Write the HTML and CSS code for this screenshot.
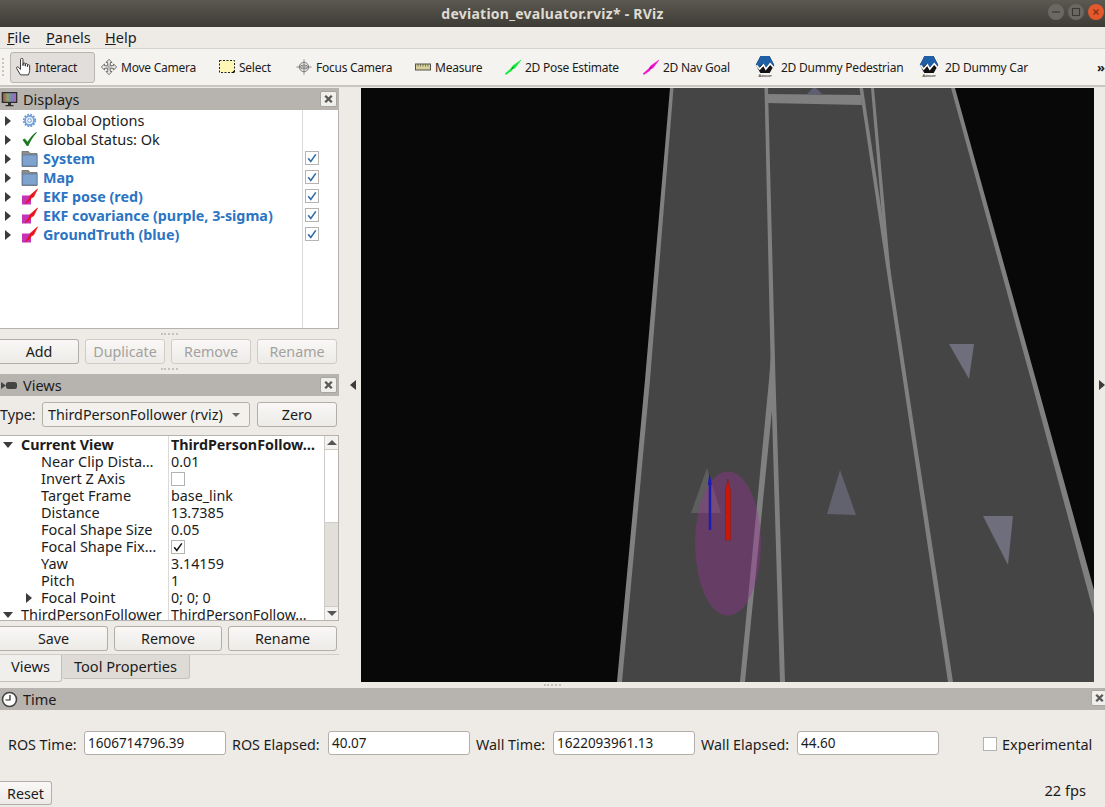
FILE: index.html
```html
<!DOCTYPE html>
<html lang="en">
<head>
<meta charset="utf-8">
<title>deviation_evaluator.rviz* - RViz</title>
<link rel="stylesheet" href="styles.css">
</head>
<body>
<svg class="defs" width="0" height="0" aria-hidden="true">
  <defs>
    <symbol id="close-x" viewBox="0 0 16 15"><path d="M4.500 4l7 7M11.500 4l-7 7" stroke="#5a5a58" stroke-width="2.600" fill="none"/></symbol>
    <symbol id="arrow-r" viewBox="0 0 6 10"><path d="M0 0l6 5-6 5z" fill="#3c3c3c"/></symbol>
    <symbol id="folder" viewBox="0 0 17 17"><path d="M1 1.500h6.500l1.500 2h7v13H1z" fill="#8c8c8a" stroke="#6c6c6a" stroke-width=".8"/><rect x="1.500" y="5" width="14.500" height="11" fill="#7fa3cf" stroke="#5d7a9c" stroke-width=".8"/></symbol>
    <symbol id="display" viewBox="0 0 17 17"><rect x="1" y="7.500" width="9" height="9" fill="#c733b8"/><path d="M4 16L8 10.500l1-3L16.500 1 12.500 9l-2 .8-1.500 2.500z" fill="#e8141c" stroke="#e8141c" stroke-width=".7" stroke-linejoin="round"/></symbol>
    <symbol id="check-blue" viewBox="0 0 14 14"><rect x=".5" y=".5" width="13" height="13" fill="#fff" stroke="#b5b3b0"/><path d="M3.200 7.200l2.600 3.200 5-7" stroke="#2f6aa8" stroke-width="1.600" fill="none"/></symbol>
    <symbol id="autoware" viewBox="0 0 24 22">
      <path d="M2.800 9L7.500 0h9l4.700 9-4.500 8H7.300z" fill="#111"/>
      <path d="M2.800 9L7.500 0h9l4.700 9-1.400 1.600-3.100-3.400-4.300 5-2.700-4.700-3.400 3.600z" fill="#1f5fa6"/>
      <path d="M3.500 9.300l3.200 3.800 3.700-4.300 2.400 4.300 4.400-5.400 3 3.600" stroke="#fff" stroke-width="1.600" fill="none"/>
      <text x="12" y="21.400" text-anchor="middle" class="aw-text">Autoware</text>
    </symbol>
  </defs>
</svg>

<div class="app">
  <header class="titlebar">
    <span class="title">deviation_evaluator.rviz* - RViz</span>
    <div class="winbtns">
      <svg class="winbtn" viewBox="0 0 16 16"><circle cx="8" cy="8" r="8" fill="#6a6861"/><path d="M4 8h8" stroke="#3a3934" stroke-width="1.200"/></svg>
      <svg class="winbtn" viewBox="0 0 16 16"><circle cx="8" cy="8" r="8" fill="#6a6861"/><rect x="4.500" y="4.500" width="7" height="7" fill="none" stroke="#3a3934" stroke-width="1.100"/></svg>
      <svg class="winbtn" viewBox="0 0 16 16"><circle cx="8" cy="8" r="8" fill="#e5582c"/><path d="M5.500 5.500l5 5M10.500 5.500l-5 5" stroke="#7c3118" stroke-width="1.300"/></svg>
    </div>
  </header>

  <nav class="menubar">
    <span class="menu menu-file"><u>F</u>ile</span>
    <span class="menu menu-panels"><u>P</u>anels</span>
    <span class="menu"><u>H</u>elp</span>
  </nav>

  <div class="toolbar">
    <span class="grip"></span>
    <div class="tool tool-interact active">
      <svg class="ticon" viewBox="1 1 13.500 16.500"><path d="M5 16.500L1.500 10.500c-.6-1.300 1-2 1.800-.9L5 11.500V2.500c0-1.700 2.300-1.700 2.300 0V8V6.500c0-1.300 2.100-1.300 2.100 0V8.500V7c0-1.200 2-1.200 2 0v2V8c0-1.100 2-1.100 2 0v4.500c0 1.800-.8 2.700-1.200 4z" fill="#fff" stroke="#222" stroke-width=".8"/></svg>
      <span class="tlabel">Interact</span>
    </div>
    <div class="tool tool-move">
      <svg class="ticon" viewBox="0 0 16 16"><path d="M8 .3l3 3.200H9.300v3.200h3.200V5L15.700 8l-3.200 3V9.300H9.300v3.200H11L8 15.700l-3-3.200h1.700V9.300H3.500V11L.3 8l3.200-3v1.700h3.200V3.500H5z" fill="#ececea" stroke="#6f6f6f" stroke-width="1"/><path d="M5 8h6M8 5v6" stroke="#9a9a98" stroke-width=".8"/></svg>
      <span class="tlabel">Move Camera</span>
    </div>
    <div class="tool tool-select">
      <svg class="ticon" viewBox="0 0 16 16"><rect x=".5" y="1.500" width="15" height="12" fill="#fdf6b4" stroke="#222" stroke-dasharray="2 1.500"/><path d="M12.500 14l3-3v3z" fill="#111"/></svg>
      <span class="tlabel">Select</span>
    </div>
    <div class="tool tool-focus">
      <svg class="ticon" viewBox="0 0 17 17"><circle cx="8.500" cy="8.500" r="5" fill="#e8e8e6" stroke="#777"/><path d="M8.500 .5v16M.5 8.500h16M4 8.500a4.500 2 0 0 0 9 0M4 8.500a4.500 2 0 0 1 9 0" stroke="#777" stroke-width=".9" fill="none"/></svg>
      <span class="tlabel">Focus Camera</span>
    </div>
    <div class="tool tool-measure">
      <svg class="ticon" viewBox="0 0 16 16"><rect x=".5" y="5" width="15" height="6" fill="#d8d09a" stroke="#55534a"/><path d="M3 5v2.500M5.500 5v2.500M8 5v2.500M10.500 5v2.500M13 5v2.500" stroke="#55534a" stroke-width=".7"/></svg>
      <span class="tlabel">Measure</span>
    </div>
    <div class="tool tool-pose">
      <svg class="ticon" viewBox="0 0 16 16"><path d="M0 14.800L6 9.500 7.500 7 16 1l-6 8-2 .8-1.500 2L1 15.500z" fill="#12e83a" stroke="#12e83a" stroke-width=".5"/><path d="M5.500 11L8 8l1 .7z" fill="#0b7a26"/></svg>
      <span class="tlabel">2D Pose Estimate</span>
    </div>
    <div class="tool tool-nav">
      <svg class="ticon" viewBox="0 0 16 16"><path d="M0 14.800L6 9.500 7.500 7 16 1l-6 8-2 .8-1.500 2L1 15.500z" fill="#ee10d0" stroke="#ee10d0" stroke-width=".5"/><path d="M5.500 11L8 8l1 .7z" fill="#8a0a7c"/></svg>
      <span class="tlabel">2D Nav Goal</span>
    </div>
    <div class="tool tool-ped">
      <svg class="ticon-wide"><use href="#autoware"/></svg>
      <span class="tlabel">2D Dummy Pedestrian</span>
    </div>
    <div class="tool tool-car">
      <svg class="ticon-wide"><use href="#autoware"/></svg>
      <span class="tlabel">2D Dummy Car</span>
    </div>
    <span class="more">»</span>
  </div>

  <main class="workspace">
    <aside class="dock">
      <div class="dock-title">
        <svg class="dock-icon" viewBox="0 0 17 17"><rect x=".7" y="1" width="15.600" height="11" fill="#2c2c2c"/><defs><linearGradient id="rainbow"><stop offset="0" stop-color="#b8474f"/><stop offset=".35" stop-color="#7eaa62"/><stop offset=".65" stop-color="#7d7fc0"/><stop offset="1" stop-color="#a06cb0"/></linearGradient></defs><rect x="2" y="2.200" width="13" height="8.600" fill="url(#rainbow)"/><path d="M7 12h3v2h2.500v1.300h-8V14H7z" fill="#2c2c2c"/></svg>
        <span class="dock-name">Displays</span>
        <svg class="dock-close"><use href="#close-x"/></svg>
      </div>
      <div class="tree displays">
        <div class="drow"><svg class="exp"><use href="#arrow-r"/></svg>
          <svg class="dicon" viewBox="0 0 17 17"><circle cx="8.500" cy="8.500" r="4.500" fill="#e4edf9" stroke="#6d9ad8" stroke-width="1.600"/><circle cx="8.500" cy="8.500" r="5.800" fill="none" stroke="#6d9ad8" stroke-width="1.800" stroke-dasharray="1.800 1.240"/><circle cx="8.500" cy="8.500" r="1.800" fill="#fff" stroke="#6d9ad8"/></svg>
          <span class="dname">Global Options</span></div>
        <div class="drow"><svg class="exp"><use href="#arrow-r"/></svg>
          <svg class="dicon" viewBox="0 0 17 17"><path d="M1.500 8.800L3.800 7.500l2.700 3.300C9 6.800 12 3.500 15.200 1l.6.8C12.500 5 9.500 10 7.300 15H5.800z" fill="#1d7a20"/></svg>
          <span class="dname">Global Status: Ok</span></div>
        <div class="drow"><svg class="exp"><use href="#arrow-r"/></svg><svg class="dicon"><use href="#folder"/></svg><span class="dname on">System</span><svg class="dcheck"><use href="#check-blue"/></svg></div>
        <div class="drow"><svg class="exp"><use href="#arrow-r"/></svg><svg class="dicon"><use href="#folder"/></svg><span class="dname on">Map</span><svg class="dcheck"><use href="#check-blue"/></svg></div>
        <div class="drow"><svg class="exp"><use href="#arrow-r"/></svg><svg class="dicon"><use href="#display"/></svg><span class="dname on">EKF pose (red)</span><svg class="dcheck"><use href="#check-blue"/></svg></div>
        <div class="drow"><svg class="exp"><use href="#arrow-r"/></svg><svg class="dicon"><use href="#display"/></svg><span class="dname on">EKF covariance (purple, 3-sigma)</span><svg class="dcheck"><use href="#check-blue"/></svg></div>
        <div class="drow"><svg class="exp"><use href="#arrow-r"/></svg><svg class="dicon"><use href="#display"/></svg><span class="dname on">GroundTruth (blue)</span><svg class="dcheck"><use href="#check-blue"/></svg></div>
      </div>
      <div class="split split-a"><span class="dots"></span></div>
      <div class="btnrow btnrow-disp">
        <span class="btn btn-add">Add</span>
        <span class="btn btn-std off">Duplicate</span>
        <span class="btn btn-std off">Remove</span>
        <span class="btn btn-std off">Rename</span>
      </div>
      <div class="split split-b"><span class="dots"></span></div>
      <div class="dock-title">
        <svg class="dock-icon" viewBox="0 0 17 17"><path d="M0 5l5 3.500L0 12z" fill="#444"/><rect x="5" y="5" width="11" height="7" rx="2.500" fill="#444"/></svg>
        <span class="dock-name">Views</span>
        <svg class="dock-close"><use href="#close-x"/></svg>
      </div>
      <div class="typerow">
        <span class="typelabel">Type:</span>
        <div class="combo"><span>ThirdPersonFollower (rviz)</span><i class="caret"></i></div>
        <span class="btn btn-zero">Zero</span>
      </div>
      <div class="props">
        <div class="props-body">
          <div class="prow"><span class="pname lv0 bold"><i class="tri-down"></i>Current View</span><span class="pval bold">ThirdPersonFollow…</span></div>
          <div class="prow"><span class="pname lv1">Near Clip Dista…</span><span class="pval">0.01</span></div>
          <div class="prow"><span class="pname lv1">Invert Z Axis</span><span class="pval"><i class="box"></i></span></div>
          <div class="prow"><span class="pname lv1">Target Frame</span><span class="pval">base_link</span></div>
          <div class="prow"><span class="pname lv1">Distance</span><span class="pval">13.7385</span></div>
          <div class="prow"><span class="pname lv1">Focal Shape Size</span><span class="pval">0.05</span></div>
          <div class="prow"><span class="pname lv1">Focal Shape Fix…</span><span class="pval"><svg class="box-check" viewBox="0 0 14 14"><rect x=".5" y=".5" width="13" height="13" fill="#fff" stroke="#b5b3b0"/><path d="M3.200 7.200l2.600 3.200 5-7" stroke="#111" stroke-width="1.500" fill="none"/></svg></span></div>
          <div class="prow"><span class="pname lv1">Yaw</span><span class="pval">3.14159</span></div>
          <div class="prow"><span class="pname lv1">Pitch</span><span class="pval">1</span></div>
          <div class="prow"><span class="pname lv1 with-exp"><svg class="exp-small"><use href="#arrow-r"/></svg>Focal Point</span><span class="pval">0; 0; 0</span></div>
          <div class="prow"><span class="pname lv0"><i class="tri-down"></i>ThirdPersonFollower</span><span class="pval">ThirdPersonFollow…</span></div>
        </div>
        <div class="vscroll">
          <span class="sb-btn"><i class="sb-up"></i></span>
          <span class="sb-thumb"></span>
          <span class="sb-track"></span>
          <span class="sb-btn sb-btn-end"><i class="sb-down"></i></span>
        </div>
      </div>
      <div class="btnrow btnrow-views">
        <span class="btn btn-save">Save</span>
        <span class="btn btn-rem">Remove</span>
        <span class="btn btn-ren">Rename</span>
      </div>
      <div class="tabs">
        <span class="tab tab-on">Views</span>
        <span class="tab tab-off">Tool Properties</span>
      </div>
    </aside>

    <div class="handle handle-left"><svg class="handle-arrow"><use href="#arrow-r"/></svg></div>

    <section class="viewport">
      <svg class="scene" viewBox="361 88 733 594" preserveAspectRatio="none">
        <rect x="361" y="88" width="733" height="594" fill="#080808"/>
        <polygon points="672,88 953,88 1094,612 1094,682 620,682" fill="#454545"/>
        <polygon points="807,94 813,88 816,88 822,94" fill="#5f5f72"/>
        <g fill="#808080">
          <polygon points="670,88 673.500,88 650,380 622,682 617,682 645,380"/>
          <polygon points="764.500,88 768,88 775.500,380 785,682 780,682 771,380"/>
          <polygon points="772.500,335 775,380 745,682 740,682 769,380"/>
          <polygon points="859.500,88 863,88 907,380 953,682 948,682 903,380"/>
          <polygon points="871,88 874,88 893,300 884,240"/>
          <polygon points="951,88 955,88 1036,380 1094,590 1094,614 1031,380"/>
          <polygon points="766,94 861,95 862,105 767,103"/>
        </g>
        <polygon points="949,344 974,344 969,379" fill="#6e6e7c"/>
        <polygon points="840,470 827,514 856,515" fill="#62626f"/>
        <polygon points="983,516 1013,516 1008,565" fill="#6e6e7c"/>
        <polygon points="707,468 691,513 721,513" fill="#5e5e5e"/>
        <ellipse cx="728" cy="543.500" rx="33" ry="72" fill="#973197" fill-opacity=".4"/>
        <polygon points="709.500,473 707.800,485 708.800,485 708.800,530 711.200,530 711.200,485 712,485" fill="#1c1cb4"/>
        <polygon points="727.800,479 725.800,489 725.500,489 725.500,540 730.500,540 730.500,489 729.800,489" fill="#c8180a" stroke="#8f1810" stroke-width=".5"/>
      </svg>
    </section>

    <div class="handle handle-right"><svg class="handle-arrow-r"><use href="#arrow-r"/></svg></div>
  </main>

  <div class="split split-c"><span class="dots"></span></div>

  <section class="timepanel">
    <div class="dock-title dock-title-time">
      <svg class="dock-icon" viewBox="0 0 17 17"><circle cx="8.500" cy="8.500" r="7" fill="#fff" stroke="#444" stroke-width="1.600"/><path d="M9 4v5H4.500" stroke="#222" stroke-width="1.200" fill="none"/></svg>
      <span class="dock-name">Time</span>
      <svg class="dock-close dock-close-time"><use href="#close-x"/></svg>
    </div>
    <div class="timerow">
      <span class="tl tl-rt">ROS Time:</span><span class="field">1606714796.39</span>
      <span class="tl tl-re">ROS Elapsed:</span><span class="field">40.07</span>
      <span class="tl tl-wt">Wall Time:</span><span class="field">1622093961.13</span>
      <span class="tl tl-we">Wall Elapsed:</span><span class="field">44.60</span>
      <i class="box box-exp"></i><span class="explabel">Experimental</span>
    </div>
    <div class="statusrow">
      <span class="btn btn-reset">Reset</span>
      <span class="fps">22 fps</span>
    </div>
  </section>
</div>
</body>
</html>
```
FILE: styles.css
```css
* { box-sizing: border-box; }
html, body { margin: 0; padding: 0; }
body {
  width: 1105px;
  height: 807px;
  overflow: hidden;
  background: #eeebe7;
  color: #1c1c1c;
  font-family: "Noto Sans", "Open Sans", sans-serif;
  font-size: 14px;
}
i { font-style: normal; display: block; }
.defs { position: absolute; }
.aw-text { font: italic 3.600px "Liberation Sans", sans-serif; fill: #222; }

.app { display: flex; flex-direction: column; height: 807px; }

/* title bar */
.titlebar {
  height: 27px;
  flex: none;
  background: linear-gradient(#5b5951, #3d3b35);
  display: flex;
  align-items: center;
  justify-content: center;
  position: relative;
}
.title { color: #dfdbd2; font-weight: 700; font-size: 14px; letter-spacing: .25px; }
.winbtns { position: absolute; right: 1px; top: 4px; display: flex; gap: 4px; }
.winbtn { width: 16px; height: 16px; display: block; }

/* menu */
.menubar {
  height: 22px;
  flex: none;
  display: flex;
  align-items: center;
  padding: 0 0 2px 7px;
  background: #eeebe7;
  border-bottom: 1px solid #d6d3ce;
}
.menu { font-size: 14.500px; }
.menu-file { width: 39px; }
.menu-panels { width: 59px; }

/* toolbar */
.toolbar {
  height: 38px;
  flex: none;
  display: flex;
  align-items: center;
  background: #f5f3ef;
  border-bottom: 2px solid #c9c6c1;
  position: relative;
  font-size: 12px;
  letter-spacing: -.25px;
}
.grip { width: 4px; height: 18px; margin-left: 2px; margin-right: 4px; border-left: 2px dotted #c9c6c1; }
.tool { display: flex; align-items: center; height: 31px; gap: 4px; flex: none; }
.ticon { width: 16px; height: 16px; flex: none; }
.ticon-wide { width: 24px; height: 22px; flex: none; }
.tlabel { white-space: nowrap; }
.tool-interact { width: 85px; padding-left: 4px; background: #e1dedb; border: 1px solid #b8b5b0; border-radius: 3px; }
.tool-interact .ticon { width: 17px; height: 18px; margin-right: -1px; }
.tool-move { margin-left: 6px; width: 118px; }
.tool-select { width: 77px; }
.tool-focus { width: 119px; }
.tool-measure { width: 90px; }
.tool-pose { width: 138px; }
.tool-nav { width: 110px; }
.tool-ped { width: 164px; }
.tool-car { width: 180px; }
.more { font-weight: 700; font-size: 13px; letter-spacing: 0; }

/* workspace */
.workspace { height: 595px; flex: none; display: flex; padding-top: 1px; }
.dock { width: 339px; flex: none; display: flex; flex-direction: column; }
.dock-title {
  height: 22px;
  flex: none;
  display: flex;
  align-items: center;
  background: #b7b3af;
  padding-left: 1px;
  position: relative;
  font-size: 14.500px;
}
.dock-icon { width: 17px; height: 17px; flex: none; }
.dock-name { margin-left: 5px; }
.dock-close {
  width: 17px;
  height: 16px;
  margin-left: auto;
  margin-right: 2px;
  background: #f1efec;
  border: 1px solid #a9a6a2;
  border-radius: 2px;
}
.dock-close-time { margin-right: -3px; margin-top: -2px; }

/* displays tree */
.displays {
  height: 219px;
  flex: none;
  background: #fff;
  border-right: 1px solid #b5b2ae;
  border-bottom: 1px solid #b5b2ae;
  position: relative;
  padding-top: 1px;
}
.displays::after {
  content: "";
  position: absolute;
  left: 302px;
  top: 0;
  bottom: 0;
  width: 1px;
  background: #dcdad7;
}
.drow { height: 19px; display: flex; align-items: center; position: relative; }
.exp { width: 6px; height: 10px; margin-left: 5px; flex: none; }
.dicon { width: 17px; height: 17px; margin-left: 10px; flex: none; }
.dname { margin: 0 0 1px 5px; font-size: 14.500px; line-height: 17px; white-space: nowrap; }
.dname.on { color: #2b74c3; font-weight: 700; font-size: 14.300px; }
.dcheck { width: 14px; height: 14px; position: absolute; left: 305px; top: 2px; }

.split { display: flex; justify-content: center; align-items: center; flex: none; }
.dots { width: 17px; height: 0; border-top: 2px dotted #c4c1bc; }
.split-a { height: 10px; }
.split-b { height: 10px; }
.split-c { height: 6px; }
.split-a .dots, .split-b .dots { margin-bottom: 1px; }

/* buttons */
.btnrow { display: flex; flex: none; height: 25px; }
.btn {
  display: flex;
  align-items: center;
  justify-content: center;
  background: linear-gradient(#f9f8f6, #ecebe8);
  border: 1px solid #b2afaa;
  border-radius: 3px;
  font-size: 14.300px;
  flex: none;
}
.btn.off { color: #a3a19e; border-color: #cfccc8; }
.btn-add { width: 79px; border-left: none; border-radius: 0 3px 3px 0; }
.btn-std { width: 80px; margin-left: 6px; }
.btn-zero { width: 80px; height: 25px; margin-left: 7px; }
.btn-save { width: 108px; border-left: none; border-radius: 0 3px 3px 0; }
.btn-rem { width: 108px; margin-left: 6px; }
.btn-ren { width: 109px; margin-left: 6px; }
.btn-reset { width: 52px; height: 24px; border-left: none; border-radius: 0 3px 3px 0; }

/* views */
.typerow { height: 25px; margin-top: 6px; display: flex; align-items: center; flex: none; font-size: 14.300px; }
.typelabel { width: 42px; flex: none; }
.combo {
  width: 208px;
  height: 25px;
  display: flex;
  align-items: center;
  justify-content: space-between;
  padding: 0 9px 0 5px;
  background: #f3f1ee;
  border: 1px solid #b2afaa;
  border-radius: 3px;
  white-space: nowrap;
  font-size: 14.300px;
}
.caret { width: 0; height: 0; border: 4px solid transparent; border-top: 4px solid #666; border-bottom: 0; }

.props {
  height: 186px;
  margin-top: 8px;
  flex: none;
  display: flex;
  background: #fff;
  border-top: 1px solid #b5b2ae;
  border-right: 1px solid #b5b2ae;
  border-bottom: 1px solid #b5b2ae;
}
.props-body { width: 324px; flex: none; overflow: hidden; height: 184px; position: relative; }
.props-body::after {
  content: "";
  position: absolute;
  left: 168px;
  top: 0;
  bottom: 0;
  width: 1px;
  background: #dcdad7;
}
.prow { height: 17px; line-height: 17px; display: flex; align-items: center; white-space: nowrap; font-size: 14.500px; }
.pname { width: 168px; flex: none; display: flex; align-items: center; }
.pval { margin-left: 3px; display: flex; align-items: center; font-size: 14.300px; }
.lv0 { padding-left: 3px; }
.lv1 { padding-left: 41px; }
.bold { font-weight: 700; font-size: 14.300px; }
.tri-down { width: 0; height: 0; border: 5px solid transparent; border-top: 6px solid #3c3c3c; border-bottom: 0; margin-right: 8px; margin-left: 0; flex: none; }
.with-exp { padding-left: 26px; }
.exp-small { width: 6px; height: 10px; margin-right: 9px; flex: none; }
.box { width: 14px; height: 14px; background: #fff; border: 1px solid #b5b3b0; flex: none; }
.box-check { width: 14px; height: 14px; display: block; }

.vscroll { flex: 1; display: flex; flex-direction: column; border-left: 1px solid #cfccc8; }
.sb-btn { height: 14px; flex: none; display: flex; align-items: center; justify-content: center; background: #f4f2ef; border-bottom: 1px solid #cfccc8; }
.sb-btn-end { border-bottom: none; border-top: 1px solid #cfccc8; }
.sb-up { width: 0; height: 0; border: 5px solid transparent; border-bottom: 5px solid #555; border-top: 0; }
.sb-down { width: 0; height: 0; border: 5px solid transparent; border-top: 5px solid #555; border-bottom: 0; }
.sb-thumb { height: 73px; flex: none; background: #fff; border-bottom: 1px solid #cfccc8; }
.sb-track { flex: 1; background: #e2dfdb; }

.btnrow-views { margin-top: 5px; }

.tabs { display: flex; margin-top: 3px; height: 29px; flex: none; border-top: 1px solid #d0cdc8; align-items: flex-start; font-size: 14.600px; }
.tab { display: flex; align-items: center; justify-content: center; flex: none; }
.tab-on { width: 62px; height: 27px; padding: 0 0 5px 0; background: #f1efec; border-right: 1px solid #c4c1bc; border-bottom: 1px solid #c4c1bc; border-radius: 0 0 3px 0; }
.tab-off { width: 128px; height: 24px; padding: 0 0 2px 0; background: #dedbd7; border-right: 1px solid #c4c1bc; border-bottom: 1px solid #c4c1bc; border-radius: 0 0 3px 3px; }

.handle { display: flex; align-items: center; flex: none; height: 594px; }
.handle-left { width: 22px; padding-left: 11px; }
.handle-right { width: 11px; padding-left: 5px; }
.handle-arrow { width: 6px; height: 10px; transform: scaleX(-1); }
.handle-arrow-r { width: 6px; height: 10px; }
.viewport { width: 733px; height: 594px; flex: none; }
.scene { width: 733px; height: 594px; display: block; }

/* time */
.timepanel { flex: 1; display: flex; flex-direction: column; }
.dock-title-time { padding-left: 1px; }
.timerow { display: flex; align-items: center; height: 24px; margin-top: 21px; padding-left: 8px; font-size: 14.300px; white-space: nowrap; }
.tl { flex: none; padding-top: 2px; }
.tl-rt { width: 76px; }
.tl-re { width: 96px; }
.tl-wt { width: 77px; }
.tl-we { width: 96px; }
.field {
  width: 142px;
  height: 24px;
  flex: none;
  display: flex;
  align-items: center;
  padding-left: 3px;
  background: #fff;
  border: 1px solid #b2afaa;
  border-radius: 3px;
  font-size: 13.500px;
}
.tl-re, .tl-wt, .tl-we { margin-left: 6px; }
.box-exp { margin-left: 44px; margin-top: 2px; }
.explabel { margin-left: 5px; padding-top: 2px; font-size: 14.500px; }
.statusrow { display: flex; align-items: center; height: 24px; margin-top: 26px; }
.fps { margin-left: auto; margin-right: 19px; margin-top: -6px; font-size: 14.600px; }
```
